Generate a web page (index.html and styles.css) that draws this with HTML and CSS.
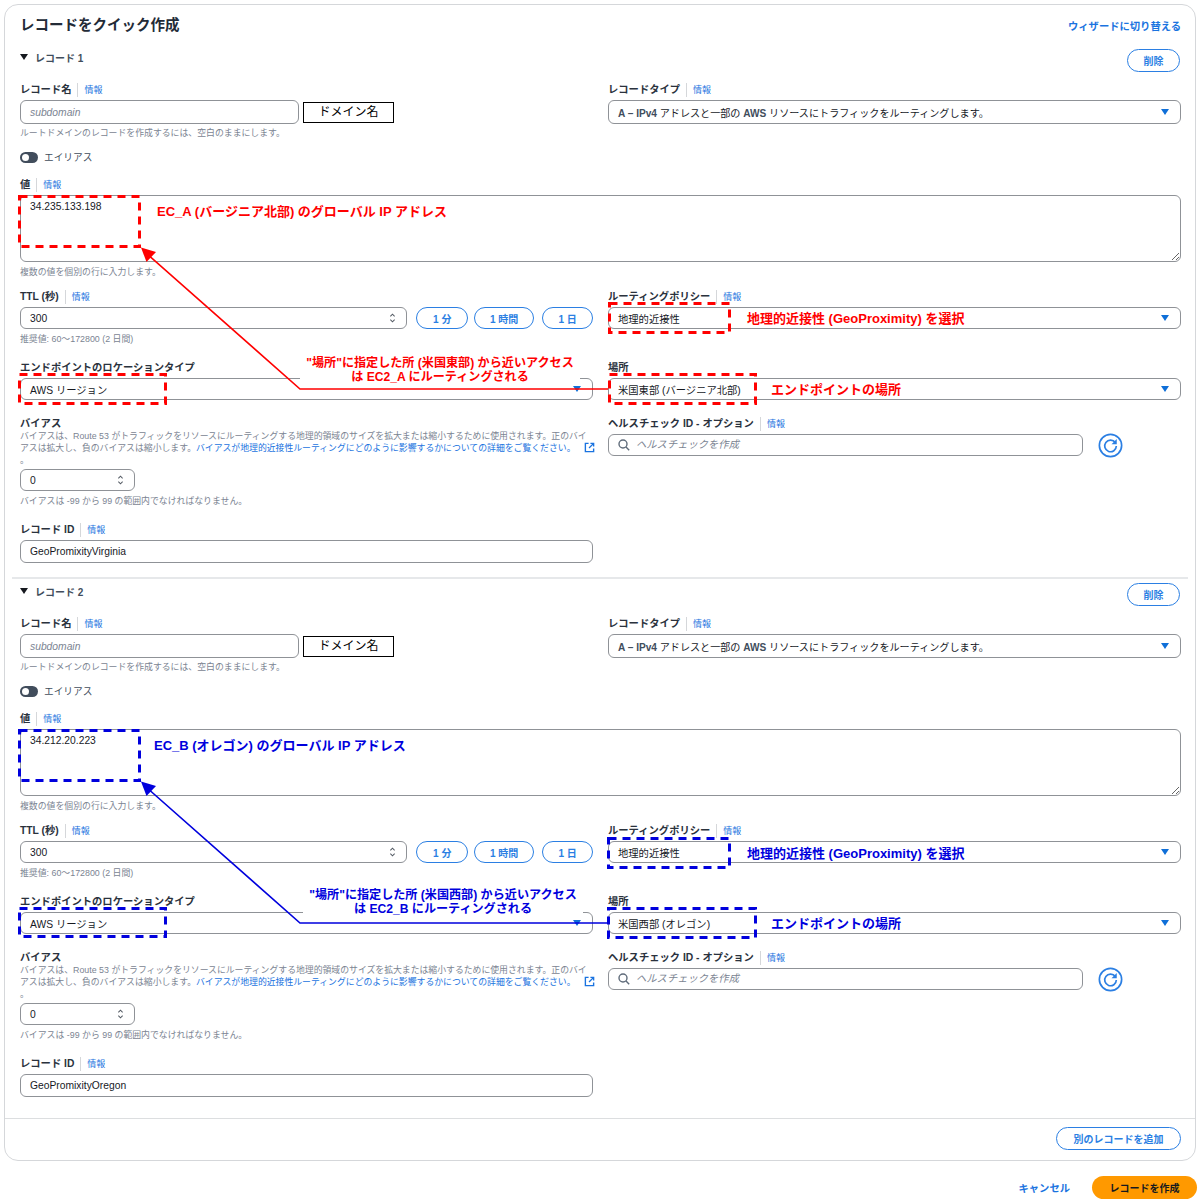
FILE: index.html
```html
<!DOCTYPE html>
<html lang="ja">
<head>
    <meta charset="UTF-8">
    <meta name="viewport" content="width=device-width, initial-scale=1.0">
    <title>レコードをクイック作成</title>
    <link rel="stylesheet" href="styles.css">
</head>
<body>
    <div class="card">
        <div class="card-head">
            <h2>レコードをクイック作成</h2>
            <a class="link-strong">ウィザードに切り替える</a>
        </div>

        <!-- レコード 1 -->
        <section class="record record-red">
            <div class="record-head">
                <div class="record-title"><span class="tri"></span>レコード 1</div>
                <button class="btn btn-delete">削除</button>
            </div>
            <div class="row row-name">
                <div>
                    <div class="label">レコード名<span class="info">情報</span></div>
                    <div class="name-line">
                        <div class="input input-name"><span class="placeholder">subdomain</span></div>
                        <div class="domain">ドメイン名</div>
                    </div>
                    <div class="hint">ルートドメインのレコードを作成するには、空白のままにします。</div>
                </div>
                <div>
                    <div class="label">レコードタイプ<span class="info">情報</span></div>
                    <div class="input input-tall select"><span><b class="semi">A – IPv4</b> アドレスと一部の <b class="semi">AWS</b> リソースにトラフィックをルーティングします。</span><span class="caret"></span></div>
                </div>
            </div>
            <div class="alias"><span class="toggle"></span>エイリアス</div>
            <div class="value">
                <div class="label">値<span class="info">情報</span></div>
                <textarea class="textarea">34.235.133.198</textarea>
                <div class="hint">複数の値を個別の行に入力します。</div>
            </div>
            <div class="row row-ttl">
                <div>
                    <div class="label">TTL (秒)<span class="info">情報</span></div>
                    <div class="ttl-line">
                        <div class="input input-ttl"><span>300</span>
                            <svg class="spin" viewBox="0 0 8 14"><path d="M1.5 5 4 2.5 6.5 5M1.5 9 4 11.5 6.5 9"/></svg>
                        </div>
                        <button class="btn btn-1m">1 分</button>
                        <button class="btn btn-1h">1 時間</button>
                        <button class="btn btn-1d">1 日</button>
                    </div>
                    <div class="hint">推奨値: 60～172800 (2 日間)</div>
                </div>
                <div>
                    <div class="label">ルーティングポリシー<span class="info">情報</span></div>
                    <div class="input select"><span>地理的近接性</span><span class="caret"></span></div>
                </div>
            </div>
            <div class="row row-loc">
                <div>
                    <div class="label">エンドポイントのロケーションタイプ</div>
                    <div class="input select"><span>AWS リージョン</span><span class="caret"></span></div>
                </div>
                <div>
                    <div class="label">場所</div>
                    <div class="input select"><span>米国東部 (バージニア北部)</span><span class="caret"></span></div>
                </div>
            </div>
            <div class="row row-bias">
                <div>
                    <div class="label">バイアス</div>
                    <div class="desc">バイアスは、Route 53 がトラフィックをリソースにルーティングする地理的領域のサイズを拡大または縮小するために使用されます。正のバイ<br>アスは拡大し、負のバイアスは縮小します。<a class="link">バイアスが地理的近接性ルーティングにどのように影響するかについての詳細をご覧ください。</a>
                        <svg class="ext" viewBox="0 0 12 12"><path d="M5 1.5H1.5v9h9V7M7 1.5h3.5V5M10.5 1.5 5.5 6.5"/></svg><br>。</div>
                    <div class="input input-bias"><span>0</span>
                        <svg class="spin" viewBox="0 0 8 14"><path d="M1.5 5 4 2.5 6.5 5M1.5 9 4 11.5 6.5 9"/></svg>
                    </div>
                    <div class="hint">バイアスは -99 から 99 の範囲内でなければなりません。</div>
                </div>
                <div>
                    <div class="label">ヘルスチェック ID - オプション<span class="info">情報</span></div>
                    <div class="health-line">
                        <div class="input input-health">
                            <svg class="search" viewBox="0 0 12 12"><circle cx="5" cy="5" r="4"/><path d="M8 8l3.2 3.2"/></svg>
                            <span class="placeholder">ヘルスチェックを作成</span>
                        </div>
                        <svg class="refresh" viewBox="0 0 24 24"><circle cx="12" cy="12" r="10.7"/><path d="M16.6 9.2A5.6 5.6 0 1 0 17.6 12.5"/><path class="fill" d="M18 5.800v5h-5z"/></svg>
                    </div>
                </div>
            </div>
            <div class="row-id">
                <div class="label">レコード ID<span class="info">情報</span></div>
                <div class="input input-id half"><span>GeoPromixityVirginia</span></div>
            </div>

            <svg class="marks" viewBox="0 0 1200 534">
                <rect x="19.5" y="148.5" width="120" height="50"/>
                <rect x="19.5" y="326.5" width="146" height="29"/>
                <rect x="609.5" y="255.5" width="120" height="29"/>
                <rect x="609.5" y="326.5" width="146" height="29"/>
                <path class="line" d="M608 341H300L146 205"/>
                <path class="head" d="M141 199.5 156 204 146.5 214z"/>
            </svg>
            <div class="note note-value">EC_A (バージニア北部) のグローバル IP アドレス</div>
            <div class="note note-policy">地理的近接性 (GeoProximity) を選択</div>
            <div class="note note-place">エンドポイントの場所</div>
            <div class="callout">"場所"に指定した所 (米国東部) から近いアクセス<br>は EC2_A にルーティングされる</div>
        </section>

        <!-- レコード 2 -->
        <section class="record record-blue">
            <div class="record-head">
                <div class="record-title"><span class="tri"></span>レコード 2</div>
                <button class="btn btn-delete">削除</button>
            </div>
            <div class="row row-name">
                <div>
                    <div class="label">レコード名<span class="info">情報</span></div>
                    <div class="name-line">
                        <div class="input input-name"><span class="placeholder">subdomain</span></div>
                        <div class="domain">ドメイン名</div>
                    </div>
                    <div class="hint">ルートドメインのレコードを作成するには、空白のままにします。</div>
                </div>
                <div>
                    <div class="label">レコードタイプ<span class="info">情報</span></div>
                    <div class="input input-tall select"><span><b class="semi">A – IPv4</b> アドレスと一部の <b class="semi">AWS</b> リソースにトラフィックをルーティングします。</span><span class="caret"></span></div>
                </div>
            </div>
            <div class="alias"><span class="toggle"></span>エイリアス</div>
            <div class="value">
                <div class="label">値<span class="info">情報</span></div>
                <textarea class="textarea">34.212.20.223</textarea>
                <div class="hint">複数の値を個別の行に入力します。</div>
            </div>
            <div class="row row-ttl">
                <div>
                    <div class="label">TTL (秒)<span class="info">情報</span></div>
                    <div class="ttl-line">
                        <div class="input input-ttl"><span>300</span>
                            <svg class="spin" viewBox="0 0 8 14"><path d="M1.5 5 4 2.5 6.5 5M1.5 9 4 11.5 6.5 9"/></svg>
                        </div>
                        <button class="btn btn-1m">1 分</button>
                        <button class="btn btn-1h">1 時間</button>
                        <button class="btn btn-1d">1 日</button>
                    </div>
                    <div class="hint">推奨値: 60～172800 (2 日間)</div>
                </div>
                <div>
                    <div class="label">ルーティングポリシー<span class="info">情報</span></div>
                    <div class="input select"><span>地理的近接性</span><span class="caret"></span></div>
                </div>
            </div>
            <div class="row row-loc">
                <div>
                    <div class="label">エンドポイントのロケーションタイプ</div>
                    <div class="input select"><span>AWS リージョン</span><span class="caret"></span></div>
                </div>
                <div>
                    <div class="label">場所</div>
                    <div class="input select"><span>米国西部 (オレゴン)</span><span class="caret"></span></div>
                </div>
            </div>
            <div class="row row-bias">
                <div>
                    <div class="label">バイアス</div>
                    <div class="desc">バイアスは、Route 53 がトラフィックをリソースにルーティングする地理的領域のサイズを拡大または縮小するために使用されます。正のバイ<br>アスは拡大し、負のバイアスは縮小します。<a class="link">バイアスが地理的近接性ルーティングにどのように影響するかについての詳細をご覧ください。</a>
                        <svg class="ext" viewBox="0 0 12 12"><path d="M5 1.5H1.5v9h9V7M7 1.5h3.5V5M10.5 1.5 5.5 6.5"/></svg><br>。</div>
                    <div class="input input-bias"><span>0</span>
                        <svg class="spin" viewBox="0 0 8 14"><path d="M1.5 5 4 2.5 6.5 5M1.5 9 4 11.5 6.5 9"/></svg>
                    </div>
                    <div class="hint">バイアスは -99 から 99 の範囲内でなければなりません。</div>
                </div>
                <div>
                    <div class="label">ヘルスチェック ID - オプション<span class="info">情報</span></div>
                    <div class="health-line">
                        <div class="input input-health">
                            <svg class="search" viewBox="0 0 12 12"><circle cx="5" cy="5" r="4"/><path d="M8 8l3.2 3.2"/></svg>
                            <span class="placeholder">ヘルスチェックを作成</span>
                        </div>
                        <svg class="refresh" viewBox="0 0 24 24"><circle cx="12" cy="12" r="10.7"/><path d="M16.6 9.2A5.6 5.6 0 1 0 17.6 12.5"/><path class="fill" d="M18 5.800v5h-5z"/></svg>
                    </div>
                </div>
            </div>
            <div class="row-id">
                <div class="label">レコード ID<span class="info">情報</span></div>
                <div class="input input-id half"><span>GeoPromixityOregon</span></div>
            </div>

            <svg class="marks" viewBox="0 0 1200 534">
                <rect x="19.5" y="148.5" width="120" height="50"/>
                <rect x="19.5" y="326.5" width="146" height="28"/>
                <rect x="608.5" y="256.5" width="121" height="29"/>
                <rect x="608.5" y="326.5" width="147" height="29"/>
                <path class="line" d="M608 341H300L146 205"/>
                <path class="head" d="M141 199.5 156 204 146.5 214z"/>
            </svg>
            <div class="note note-value">EC_B (オレゴン) のグローバル IP アドレス</div>
            <div class="note note-policy">地理的近接性 (GeoProximity) を選択</div>
            <div class="note note-place">エンドポイントの場所</div>
            <div class="callout">"場所"に指定した所 (米国西部) から近いアクセス<br>は EC2_B にルーティングされる</div>
        </section>

        <div class="card-foot">
            <button class="btn btn-add">別のレコードを追加</button>
        </div>
    </div>

    <div class="actions">
        <a class="link-strong">キャンセル</a>
        <button class="btn-primary">レコードを作成</button>
    </div>
</body>
</html>
```

FILE: styles.css
```css
* {
    box-sizing: border-box;
}
body {
    margin: 0;
    padding: 4px 0 0 4px;
    width: 1200px;
    background-color: #fff;
    color: #16191f;
    font-family: "Liberation Sans", "Noto Sans CJK JP", sans-serif;
    font-size: 10px;
}
.card {
    width: 1192px;
    height: 1157px;
    border: 1px solid #d5d7da;
    border-radius: 14px;
}
.card-head {
    display: flex;
    justify-content: space-between;
    align-items: center;
    height: 43px;
    padding: 0 14px 3px 15px;
}
h2 {
    margin: 0;
    font-size: 14.5px;
    line-height: 20px;
    font-weight: 700;
    color: #232b37;
}
a {
    color: #1a73e0;
}
.link-strong {
    font-size: 10.3px;
    font-weight: 700;
}

/* レコード */
.record {
    position: relative;
    height: 531px;
    margin: 0 7px 3px;
    padding: 0 7px 0 8px;
    border-bottom: 2px solid #e6e8ea;
}
.record-blue {
    height: 534px;
    margin-bottom: 2px;
    border-bottom: none;
}
.record-head {
    display: flex;
    justify-content: space-between;
    align-items: center;
    height: 26px;
}
.record-title {
    display: flex;
    align-items: center;
    margin-bottom: 8px;
    font-size: 10px;
    font-weight: 700;
    color: #414d5c;
}
.tri {
    width: 0;
    height: 0;
    margin-right: 7px;
    border-left: 4px solid transparent;
    border-right: 4px solid transparent;
    border-top: 6px solid #16191f;
}
.row {
    display: grid;
    grid-template-columns: 573px 573px;
    column-gap: 15px;
}
.row-name {
    margin-top: 8px;
}
.label {
    display: flex;
    align-items: center;
    height: 14px;
    margin-bottom: 4px;
    padding-top: 2px;
    font-size: 10.3px;
    line-height: 14px;
    font-weight: 700;
    color: #2a323d;
    white-space: nowrap;
}
.info {
    margin-left: 6px;
    padding-left: 6px;
    border-left: 1px solid #d5d7da;
    font-size: 9px;
    font-weight: 400;
    color: #1a73e0;
}
.input {
    display: flex;
    align-items: center;
    justify-content: space-between;
    height: 22px;
    padding: 0 9px;
    background-color: #fff;
    border: 1.5px solid #8f9297;
    border-radius: 6px;
    font-size: 10.3px;
    white-space: nowrap;
}
.input-tall {
    height: 24px;
    font-size: 10.1px;
}
.input-id {
    height: 23px;
}
.semi {
    font-weight: 700;
    color: #414d5c;
}
.select {
    padding-right: 11px;
}
.caret {
    width: 0;
    height: 0;
    border-left: 4px solid transparent;
    border-right: 4px solid transparent;
    border-top: 6px solid #0f6fd8;
}
.placeholder {
    font-style: italic;
    color: #7b8492;
}
.name-line {
    display: flex;
    align-items: center;
    gap: 4px;
}
.input-name {
    width: 279px;
    height: 24px;
}
.domain {
    width: 91px;
    height: 21px;
    border: 1px solid #000;
    font-size: 12px;
    line-height: 19px;
    text-align: center;
    color: #000;
}
.hint {
    height: 12px;
    margin-top: 3px;
    font-size: 8.87px;
    line-height: 12px;
    color: #7b8492;
    white-space: nowrap;
}
.alias {
    display: flex;
    align-items: center;
    height: 14px;
    margin-top: 11px;
    font-size: 9.7px;
    color: #414d5c;
}
.toggle {
    position: relative;
    width: 18px;
    height: 11px;
    margin-right: 6px;
    border-radius: 6px;
    background-color: #414d5c;
}
.toggle::after {
    content: "";
    position: absolute;
    left: 2px;
    top: 2px;
    width: 7px;
    height: 7px;
    border-radius: 50%;
    background-color: #fff;
}
.value {
    margin-top: 13px;
}
.textarea {
    display: block;
    width: 100%;
    height: 67px;
    padding: 5px 9px;
    border: 1.5px solid #8f9297;
    border-radius: 6px;
    color: #16191f;
    font-family: inherit;
    font-size: 10.3px;
}
.value .hint {
    margin-top: 4px;
}
.row-ttl {
    margin-top: 11px;
}
.ttl-line {
    display: flex;
    align-items: center;
}
.input-ttl {
    width: 388px;
}
.spin {
    width: 7px;
    height: 12px;
    margin-right: 1px;
    fill: none;
    stroke: #545b64;
    stroke-width: 1.2;
}
.btn {
    height: 22px;
    padding: 0;
    background-color: #fff;
    border: 1.5px solid #2b7fe3;
    border-radius: 12px;
    color: #2b7fe3;
    font-family: inherit;
    font-size: 10px;
    font-weight: 700;
}
.btn-1m {
    width: 52px;
    margin-left: 9px;
}
.btn-1h {
    width: 60px;
    margin-left: 6px;
}
.btn-1d {
    width: 51px;
    margin-left: 8px;
}
.btn-delete {
    width: 53px;
    height: 23px;
    margin-top: -2px;
    margin-right: 1px;
}
.row-ttl .hint {
    margin-top: 4px;
}
.row-loc {
    margin-top: 15px;
}
.row-bias {
    margin-top: 16px;
}
.row-bias .label {
    margin-bottom: 0;
}
.row-bias > div:last-child .label {
    margin-bottom: 4px;
}
.desc {
    height: 36px;
    margin-bottom: 3px;
    font-size: 8.85px;
    line-height: 12px;
    color: #7b8492;
    white-space: nowrap;
}
.link {
    color: #1a73e0;
}
.ext {
    width: 11px;
    height: 11px;
    margin-left: 6px;
    vertical-align: -2px;
    fill: none;
    stroke: #1a73e0;
    stroke-width: 1.5;
}
.input-bias {
    width: 115px;
}
.row-bias .hint {
    margin-top: 4px;
}
.health-line {
    display: flex;
    align-items: center;
}
.input-health {
    justify-content: flex-start;
    width: 475px;
}
.input-health .placeholder {
    padding-bottom: 4px;
}
.search {
    width: 12px;
    height: 12px;
    margin-right: 6px;
    fill: none;
    stroke: #5f6b7a;
    stroke-width: 1.4;
}
.refresh {
    width: 25px;
    height: 25px;
    margin: -2px 0 -2px 15px;
    fill: none;
    stroke: #2b7fe3;
    stroke-width: 1.6;
}
.refresh .fill {
    fill: #2b7fe3;
    stroke: none;
}
.row-id {
    margin-top: 15px;
}
.half {
    width: 573px;
}

/* 注釈 (スクリーンショットの上に描かれたもの) */
.marks {
    position: absolute;
    left: -12px;
    top: 0;
    width: 1200px;
    height: 534px;
    fill: none;
    pointer-events: none;
}
.marks rect {
    stroke-width: 3;
    stroke-dasharray: 8 6;
}
.marks .line {
    stroke-width: 1.6;
}
.marks .head {
    stroke: none;
}
.record-red .marks rect,
.record-red .marks .line {
    stroke: #f00;
}
.record-red .marks .head {
    fill: #f00;
}
.record-blue .marks rect,
.record-blue .marks .line {
    stroke: #00d;
}
.record-blue .marks .head {
    fill: #00d;
}
.note,
.callout {
    position: absolute;
    font-weight: 700;
    white-space: nowrap;
}
.note {
    font-size: 13px;
    line-height: 16px;
}
.record-red .note,
.record-red .callout {
    color: #f00;
}
.record-blue .note,
.record-blue .callout {
    color: #00d;
}
.note-value {
    left: 145px;
    top: 156px;
}
.record-blue .note-value {
    left: 142px;
}
.note-policy {
    left: 735px;
    top: 263px;
}
.record-blue .note-policy {
    top: 264px;
}
.note-place {
    left: 759px;
    top: 334px;
}
.callout {
    left: 288px;
    top: 308px;
    width: 280px;
    background-color: #fff;
    font-size: 12.1px;
    line-height: 14px;
    text-align: center;
}
.record-blue .callout {
    left: 291px;
    top: 306px;
}
.card-foot {
    display: flex;
    justify-content: flex-end;
    height: 43px;
    padding: 8px 14px 0 0;
    border-top: 1.5px solid #dcdee0;
}
.btn-add {
    width: 125px;
    height: 23px;
}
.actions {
    display: flex;
    justify-content: flex-end;
    align-items: center;
    gap: 22px;
    width: 1193px;
    margin-top: 15px;
}
.btn-primary {
    width: 105px;
    height: 23px;
    padding: 0;
    border: none;
    border-radius: 12px;
    background-color: #ff9900;
    color: #16191f;
    font-family: inherit;
    font-size: 10px;
    font-weight: 700;
}
```
